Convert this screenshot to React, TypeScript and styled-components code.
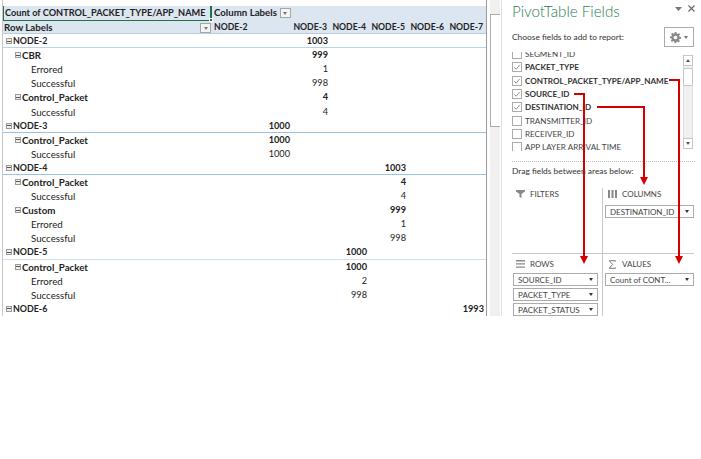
import React from "react";
import styled, { createGlobalStyle } from "styled-components";

const Global = createGlobalStyle`
  html, body { margin: 0; padding: 0; background: #fff; }
  #root { width: 701px; height: 459px; overflow: hidden; }
`;

const Page = styled.div`
  position: relative;
  width: 701px;
  height: 459px;
  background: #fff;
  font-family: Lato, "Liberation Sans", Arial, sans-serif;
  color: #222;
`;
const Window = styled.div`
  display: flex;
  height: 316px;
  overflow: hidden;
`;
const Sheet = styled.div`
  width: 483px;
  margin-left: 2px;
  border-left: 1px solid #c8c8c8;
  padding-top: 6px;
  flex: none;
`;
const Row = styled.div<{ $head?: boolean; $line?: string }>`
  display: grid;
  grid-template-columns: 209px 78px 38px 39px 39px 39px 39px;
  height: ${(p) => (p.$head ? "14px" : "14.1px")};
  line-height: 14px;
  box-sizing: border-box;
  font-size: 9.7px;
  white-space: nowrap;
  background: ${(p) => (p.$head ? "#dce6f1" : "#fff")};
  ${(p) => (p.$line ? `border-bottom: 1px solid ${p.$line};` : "")}
`;
const Cell = styled.div<{ $bold?: boolean; $right?: boolean; $pad?: number; $size?: number }>`
  font-weight: ${(p) => (p.$bold ? 700 : 400)};
  ${(p) => (p.$size ? `font-size: ${p.$size}px;` : "")}
  padding-left: ${(p) => p.$pad ?? 0}px;
  padding-right: ${(p) => (p.$right ? 1 : 0)}px;
  display: flex;
  align-items: center;
  justify-content: ${(p) => (p.$right ? "flex-end" : "flex-start")};
  gap: 1px;
  min-width: 0;
`;
const ValueCell = styled(Cell)`
  padding-right: 0;
  font-size: 9.2px;
`;
const ActiveCell = styled(Cell)`
  position: relative;
  box-sizing: border-box;
  border: 1px solid #217346;
  border-top: 0;
  border-right-width: 2px;
  font-weight: 700;
  font-size: 9.2px;
  padding-left: 1px;
`;
const SpanCell = styled(Cell)`
  grid-column: 2 / span 2;
  gap: 3px;
  align-items: flex-start;
  line-height: 13px;
`;
const Handle = styled.span`
  position: absolute;
  right: -3px;
  bottom: -2px;
  width: 4px;
  height: 4px;
  background: #217346;
  border: 1px solid #fff;
  box-sizing: border-box;
`;
const Caret = styled.span`
  box-sizing: border-box;
  width: 11px;
  height: 10px;
  border: 1px solid #a6a6a6;
  background: #f4f4f4;
  display: inline-flex;
  align-items: center;
  justify-content: center;
  flex: none;
  margin-top: 2px;
  &::after {
    content: "";
    border-left: 2.5px solid transparent;
    border-right: 2.5px solid transparent;
    border-top: 3px solid #777;
  }
`;
const LabelHead = styled(Cell)`
  justify-content: space-between;
  padding-left: 1px;
  padding-right: 1px;
`;
const Toggle = styled.span`
  box-sizing: border-box;
  width: 6px;
  height: 6px;
  border: 1px solid #9a9a9a;
  background: #eee;
  display: inline-flex;
  align-items: center;
  justify-content: center;
  flex: none;
  &::after {
    content: "";
    width: 4px;
    height: 1px;
    background: #555;
  }
`;
const HeadNode = styled(Cell)`
  font-weight: 700;
  font-size: 8.7px;
`;
const VScroll = styled.div`
  width: 14px;
  flex: none;
  background: #fff;
  border-left: 1px solid #9a9a9a;
  box-sizing: border-box;
  padding-left: 3px;
`;
const VTrack = styled.div`
  height: 100%;
  background: #f0f0f0;
  padding-top: 14px;
  box-sizing: border-box;
`;
const VThumb = styled.div`
  height: 113px;
  background: #fff;
  border: 1px solid #ababab;
  border-right: 0;
  box-sizing: border-box;
`;
const Pane = styled.div`
  width: 200px;
  margin-left: 1px;
  flex: none;
  border-left: 1px solid #e1e1e1;
  box-sizing: border-box;
  padding-left: 10px;
  font-size: 8.4px;
  color: #333;
`;
const PaneHead = styled.div`
  height: 22px;
  display: flex;
  justify-content: space-between;
  align-items: center;
  padding-right: 6px;
`;
const Title = styled.div`
  font-size: 15.2px;
  line-height: 22px;
  color: #2a7d52;
  font-weight: 300;
`;
const PaneTools = styled.div`
  display: flex;
  align-items: center;
  gap: 6px;
  margin-top: -5px;
`;
const Choose = styled.div`
  height: 30px;
  display: flex;
  justify-content: space-between;
  align-items: center;
  padding-right: 7px;
  font-size: 8.4px;
  color: #333;
`;
const GearBtn = styled.div`
  box-sizing: border-box;
  width: 30px;
  height: 20px;
  border: 1px solid #ababab;
  display: flex;
  align-items: center;
  justify-content: center;
  gap: 3px;
  &::after {
    content: "";
    border-left: 2.5px solid transparent;
    border-right: 2.5px solid transparent;
    border-top: 3px solid #777;
  }
`;
const ListWrap = styled.div`
  height: 99px;
  display: flex;
  overflow: hidden;
  padding-right: 8px;
`;
const List = styled.div`
  flex: 1;
  height: 104px;
  overflow: hidden;
  margin-top: -4.7px;
`;
const Field = styled.div<{ $bold?: boolean }>`
  height: 13.35px;
  display: flex;
  align-items: center;
  gap: 3px;
  font-size: 8.1px;
  white-space: nowrap;
  font-weight: ${(p) => (p.$bold ? 700 : 400)};
  color: ${(p) => (p.$bold ? "#333" : "#444")};
`;
const Check = styled.span`
  box-sizing: border-box;
  width: 10px;
  height: 10px;
  border: 1px solid #ababab;
  background: #fff;
  flex: none;
  display: inline-flex;
  align-items: center;
  justify-content: center;
`;
const ListScroll = styled.div`
  width: 10px;
  flex: none;
  background: #f0f0f0;
  display: flex;
  flex-direction: column;
  justify-content: space-between;
  height: 94px;
  margin-top: 3px;
  box-sizing: border-box;
  border: 1px solid #e0e0e0;
  position: relative;
`;
const ListBtn = styled.span<{ $up?: boolean }>`
  height: 9px;
  background: #fff;
  border: 1px solid #c6c6c6;
  margin: -1px;
  display: flex;
  align-items: center;
  justify-content: center;
  &::after {
    content: "";
    border-left: 2.5px solid transparent;
    border-right: 2.5px solid transparent;
    ${(p) => (p.$up ? "border-bottom: 3px solid #555;" : "border-top: 3px solid #555;")}
  }
`;
const ListThumb = styled.span`
  position: absolute;
  left: -1px;
  right: -1px;
  top: 12px;
  height: 16px;
  background: #fff;
  border: 1px solid #c6c6c6;
`;
const Dotted = styled.div`
  margin: 10px 6px 0 0;
  border-top: 1px dotted #bbb;
`;
const Drag = styled.div`
  font-size: 8.4px;
  height: 19px;
  line-height: 19px;
  color: #333;
`;
const Areas = styled.div`
  display: grid;
  grid-template-columns: 91px 91px;
  grid-template-rows: 66px 1fr;
  height: 130px;
  margin-top: 7px;
  overflow: hidden;
`;
const Area = styled.div<{ $left?: boolean; $bottom?: boolean }>`
  box-sizing: border-box;
  ${(p) => (p.$left ? "border-right: 1px solid #c8c8c8; padding-right: 6px; padding-left: 1px;" : "padding-left: 2px;")}
  ${(p) => (p.$bottom ? "" : "border-bottom: 1px solid #c8c8c8;")}
`;
const AreaLabel = styled.div<{ $low?: boolean }>`
  height: 12px;
  display: flex;
  align-items: center;
  gap: 5px;
  font-size: 8px;
  color: #444;
  padding-left: 3px;
  margin-top: ${(p) => (p.$low ? 4 : 0)}px;
  margin-bottom: ${(p) => (p.$low ? 3 : 5)}px;
  text-transform: uppercase;
`;
const Chip = styled.div<{ $wide?: boolean }>`
  box-sizing: border-box;
  height: 13px;
  width: ${(p) => (p.$wide ? 89 : 85)}px;
  margin-bottom: 2px;
  border: 1px solid #ababab;
  background: #fff;
  display: flex;
  justify-content: space-between;
  align-items: center;
  padding: 0 4px;
  font-size: 8px;
  white-space: nowrap;
  color: #444;
  &::after {
    content: "";
    flex: none;
    border-left: 2.5px solid transparent;
    border-right: 2.5px solid transparent;
    border-top: 3px solid #333;
  }
`;
const Overlay = styled.svg`
  position: absolute;
  left: 0;
  top: 0;
  pointer-events: none;
`;

type R = { label: string; lvl: 0 | 1 | 2; col?: number; val: string; line?: string };
const rows: R[] = [
  { label: "NODE-2", lvl: 0, col: 3, val: "1003", line: "#bcd3ea" },
  { label: "CBR", lvl: 1, col: 3, val: "999" },
  { label: "Errored", lvl: 2, col: 3, val: "1" },
  { label: "Successful", lvl: 2, col: 3, val: "998" },
  { label: "Control_Packet", lvl: 1, col: 3, val: "4" },
  { label: "Successful", lvl: 2, col: 3, val: "4" },
  { label: "NODE-3", lvl: 0, col: 2, val: "1000", line: "#9cc3e6" },
  { label: "Control_Packet", lvl: 1, col: 2, val: "1000" },
  { label: "Successful", lvl: 2, col: 2, val: "1000" },
  { label: "NODE-4", lvl: 0, col: 5, val: "1003", line: "#9cc3e6" },
  { label: "Control_Packet", lvl: 1, col: 5, val: "4" },
  { label: "Successful", lvl: 2, col: 5, val: "4" },
  { label: "Custom", lvl: 1, col: 5, val: "999" },
  { label: "Errored", lvl: 2, col: 5, val: "1" },
  { label: "Successful", lvl: 2, col: 5, val: "998" },
  { label: "NODE-5", lvl: 0, col: 4, val: "1000", line: "#cfdfee" },
  { label: "Control_Packet", lvl: 1, col: 4, val: "1000" },
  { label: "Errored", lvl: 2, col: 4, val: "2" },
  { label: "Successful", lvl: 2, col: 4, val: "998" },
  { label: "NODE-6", lvl: 0, col: 7, val: "1993" },
];

const Tick = () => (
  <svg width="8" height="8" viewBox="0 0 8 8" fill="none" stroke="#888" strokeWidth="0.9">
    <path d="M1.2 4.2 L3.2 6.2 L6.8 1.8" />
  </svg>
);
const Gear = () => (
  <svg width="11" height="11" viewBox="0 0 12 12" fill="#8a8a8a">
    <path d="M5 0h2l.3 1.7 1.2.5L10 1.2 11 2.6 9.9 3.9l.4 1.2L12 5.4v1.9l-1.7.3-.5 1.2 1 1.4-1.4 1.2-1.4-1-1.1.5L6.9 12H5l-.3-1.7-1.2-.5-1.4 1L.9 9.5l1-1.4-.5-1.2L0 6.7V5l1.7-.3.5-1.2-1-1.4L2.6.9l1.4 1 1-.4z" />
    <circle cx="6" cy="6" r="2" fill="#fff" />
  </svg>
);
const FilterIcon = () => (
  <svg width="9" height="8" viewBox="0 0 9 8" fill="#888"><path d="M0 0h9v1.5L5.5 4v4l-2-1V4L0 1.5z" /></svg>
);
const ColumnsIcon = () => (
  <svg width="9" height="8" viewBox="0 0 9 8" fill="#888"><path d="M0 0h2v8H0zM3.5 0h2v8h-2zM7 0h2v8H7z" /></svg>
);
const RowsIcon = () => (
  <svg width="9" height="8" viewBox="0 0 9 8" fill="#888"><path d="M0 0h9v1.4H0zM0 3.2h9v1.4H0zM0 6.4h9v1.4H0z" /></svg>
);
const SumIcon = () => (
  <svg width="9" height="9" viewBox="0 0 9 9" fill="none" stroke="#777" strokeWidth="1"><path d="M7.5 1.5V.7H1.2L4.6 4.5 1.2 8.3h6.3v-.8" /></svg>
);
const DownTri = () => (
  <svg width="7" height="4" viewBox="0 0 7 4" fill="#777"><path d="M0 0h7L3.5 4z" /></svg>
);
const CloseX = () => (
  <svg width="7" height="7" viewBox="0 0 7 7" stroke="#666" strokeWidth="1.1"><path d="M.5.5l6 6M6.5.5l-6 6" /></svg>
);

const fields: { n: string; on?: boolean }[] = [
  { n: "SEGMENT_ID" },
  { n: "PACKET_TYPE", on: true },
  { n: "CONTROL_PACKET_TYPE/APP_NAME", on: true },
  { n: "SOURCE_ID", on: true },
  { n: "DESTINATION_ID", on: true },
  { n: "TRANSMITTER_ID" },
  { n: "RECEIVER_ID" },
  { n: "APP LAYER ARRIVAL TIME" },
];

export default function App() {
  return (
    <Page>
      <Global />
      <Window>
        <Sheet>
          <Row $head>
            <ActiveCell>
              Count of CONTROL_PACKET_TYPE/APP_NAME
              <Handle />
            </ActiveCell>
            <SpanCell $bold $pad={2}>
              Column Labels <Caret />
            </SpanCell>
          </Row>
          <Row $head $line="#b8cce4">
            <LabelHead $bold>
              Row Labels <Caret />
            </LabelHead>
            <HeadNode $pad={2}>NODE-2</HeadNode>
            {["NODE-3", "NODE-4", "NODE-5", "NODE-6", "NODE-7"].map((n) => (
              <HeadNode key={n} $right>{n}</HeadNode>
            ))}
          </Row>
          {rows.map((r, i) => (
            <Row key={i} $line={r.line}>
              <Cell
                $bold={r.lvl < 2}
                $size={r.lvl === 0 ? 8.9 : undefined}
                $pad={r.lvl === 0 ? 3 : r.lvl === 1 ? 12 : 28}
              >
                {r.lvl < 2 && <Toggle />}
                {r.label}
              </Cell>
              {[2, 3, 4, 5, 6, 7].map((c) => (
                <ValueCell key={c} $right $bold={r.lvl < 2}>
                  {c === r.col ? r.val : ""}
                </ValueCell>
              ))}
            </Row>
          ))}
        </Sheet>
        <VScroll>
          <VTrack>
            <VThumb />
          </VTrack>
        </VScroll>
        <Pane>
          <PaneHead>
            <Title>PivotTable Fields</Title>
            <PaneTools><DownTri /><CloseX /></PaneTools>
          </PaneHead>
          <Choose>
            Choose fields to add to report:
            <GearBtn><Gear /></GearBtn>
          </Choose>
          <ListWrap>
            <List>
              {fields.map((f) => (
                <Field key={f.n} $bold={f.on}>
                  <Check>{f.on && <Tick />}</Check>
                  {f.n}
                </Field>
              ))}
            </List>
            <ListScroll>
              <ListBtn $up />
              <ListThumb />
              <ListBtn />
            </ListScroll>
          </ListWrap>
          <Dotted />
          <Drag>Drag fields between areas below:</Drag>
          <Areas>
            <Area $left>
              <AreaLabel><FilterIcon /> Filters</AreaLabel>
            </Area>
            <Area>
              <AreaLabel><ColumnsIcon /> Columns</AreaLabel>
              <Chip $wide>DESTINATION_ID</Chip>
            </Area>
            <Area $left $bottom>
              <AreaLabel $low><RowsIcon /> Rows</AreaLabel>
              <Chip>SOURCE_ID</Chip>
              <Chip>PACKET_TYPE</Chip>
              <Chip>PACKET_STATUS</Chip>
            </Area>
            <Area $bottom>
              <AreaLabel $low><SumIcon /> Values</AreaLabel>
              <Chip $wide>Count of CONT...</Chip>
            </Area>
          </Areas>
        </Pane>
      </Window>
      <Overlay width="701" height="459" viewBox="0 0 701 459" fill="none">
        <g stroke="#d40000" strokeWidth="2">
          <path d="M574 94H584V257" />
          <path d="M597 107H644V178" />
          <path d="M669 80H679V257" />
        </g>
        <g fill="#d40000">
          <path d="M580 256h8l-4 8z" />
          <path d="M640 177h8l-4 8z" />
          <path d="M675 256h8l-4 8z" />
        </g>
      </Overlay>
    </Page>
  );
}
